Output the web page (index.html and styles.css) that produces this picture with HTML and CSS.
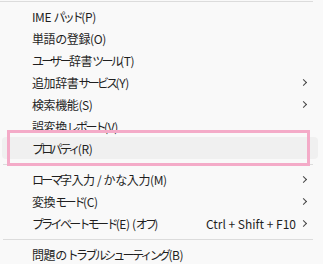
FILE: index.html
```html
<!DOCTYPE html>
<html lang="ja">
<head>
    <meta charset="UTF-8">
    <title>IME メニュー</title>
    <link rel="stylesheet" href="styles.css">
</head>
<body>
    <div class="menu">
        <div class="sep sep-top"></div>

        <div class="item"><span class="label">IME <span class="kana">パッド</span>(P)</span></div>
        <div class="item"><span class="label">単語の登録(O)</span></div>
        <div class="item"><span class="label"><span class="kana">ユーザー</span>辞書<span class="kana">ツール</span>(T)</span></div>
        <div class="item"><span class="label">追加辞書<span class="kana">サービス</span>(Y)</span><span class="arrow"></span></div>
        <div class="item"><span class="label">検索機能(S)</span><span class="arrow"></span></div>
        <div class="item"><span class="label">誤変換<span class="kana">レポート</span>(V)</span></div>
        <div class="item hover"><span class="label"><span class="kana">プロパティ</span>(R)</span></div>

        <div class="sep"></div>

        <div class="item"><span class="label"><span class="kana">ローマ</span>字入力 / かな入力(M)</span><span class="arrow"></span></div>
        <div class="item"><span class="label">変換<span class="kana">モード</span>(C)</span><span class="arrow"></span></div>
        <div class="item"><span class="label"><span class="kana">プライベートモード</span>(E) (<span class="kana">オフ</span>)</span><span class="shortcut">Ctrl + Shift + F10</span><span class="arrow"></span></div>

        <div class="sep"></div>

        <div class="item"><span class="label">問題の<span class="kana">トラブルシューティング</span>(B)</span></div>

        <!-- annotation frame around the selected item -->
        <div class="mark"></div>
    </div>
</body>
</html>
```

FILE: styles.css
```css
/* Context menu */
:root {
    --menu-bg: #f9f9f9;
    --text-color: #1f1f1f;
    --hover-bg: #f0f0f0;
    --sep-color: #dcdcdc;
    --mark-color: #f4abc8;
}

body {
    margin: 0;
    background-color: var(--menu-bg);
    font-family: 'Noto Sans CJK JP', 'Noto Sans', sans-serif;
    font-size: 12px;
    color: var(--text-color);
}

.menu {
    position: relative;
    width: 316px;
    padding: 0 5px 0 2px;
}

.sep {
    height: 1px;
    background-color: var(--sep-color);
    margin: 5px 5px 3px 1px;
}

.sep-top {
    margin: 1px 5px 3px -2px;
}

.item {
    display: flex;
    align-items: center;
    height: 22px;
    padding: 0 11px 0 30px;
    border-radius: 4px;
    white-space: nowrap;
}

.item.hover {
    background-color: var(--hover-bg);
}

.label {
    flex: 1;
    letter-spacing: -0.4px;
}

/* katakana runs are set narrower, like the system UI font */
.kana {
    letter-spacing: -2.7px;
}

.shortcut {
    margin-right: 5px;
}

.arrow {
    width: 4px;
    height: 4px;
    border-top: 1px solid #444;
    border-right: 1px solid #444;
    transform: rotate(45deg);
    margin-right: 1px;
}

.mark {
    position: absolute;
    left: 7px;
    top: 129px;
    width: 297px;
    height: 30px;
    border: 3px solid var(--mark-color);
}
```
